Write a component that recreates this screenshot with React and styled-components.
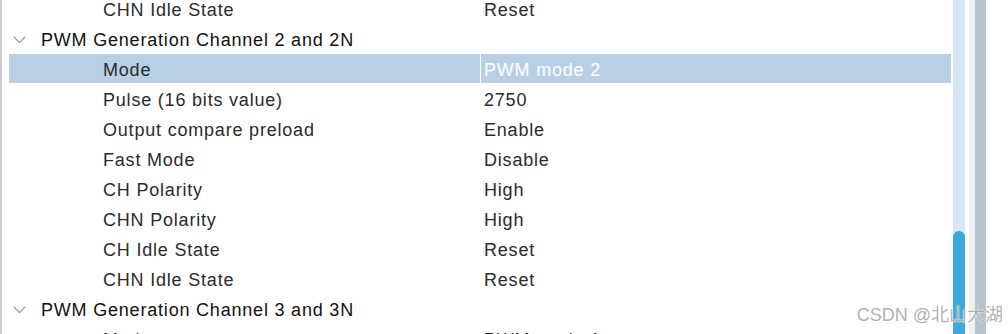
import React from 'react'
import styled, { createGlobalStyle } from 'styled-components'

const Global = createGlobalStyle`
  html, body {
    margin: 0;
    padding: 0;
    background: #fff;
    overflow: hidden;
  }
  body {
    font-family: "Liberation Sans", Arial, sans-serif;
  }
`

const rows = [
  { level: 2, label: 'CHN Idle State', value: 'Reset' },
  { level: 1, label: 'PWM Generation Channel 2 and 2N' },
  { level: 2, label: 'Mode', value: 'PWM mode 2', selected: true },
  { level: 2, label: 'Pulse (16 bits value)', value: '2750' },
  { level: 2, label: 'Output compare preload', value: 'Enable' },
  { level: 2, label: 'Fast Mode', value: 'Disable' },
  { level: 2, label: 'CH Polarity', value: 'High' },
  { level: 2, label: 'CHN Polarity', value: 'High' },
  { level: 2, label: 'CH Idle State', value: 'Reset' },
  { level: 2, label: 'CHN Idle State', value: 'Reset' },
  { level: 1, label: 'PWM Generation Channel 3 and 3N' },
  { level: 2, label: 'Mode', value: 'PWM mode 1' },
]

function Chevron() {
  return (
    <svg width="13" height="8" viewBox="0 0 13 8">
      <polyline points="0.8,0.8 6.5,6.6 12.2,0.8" fill="none" stroke="#9a9a9a" strokeWidth="1.3" />
    </svg>
  )
}

function App() {
  return (
    <>
      <Global />
      <Frame>
        <Tree>
          <List>
            {rows.map((r, i) => (
              <Row key={i} $selected={r.selected}>
                <Label $level={r.level}>
                  {r.level === 1 && <Toggle><Chevron /></Toggle>}
                  {r.label}
                </Label>
                {r.level === 2 && <Value $selected={r.selected}>{r.value}</Value>}
              </Row>
            ))}
          </List>
        </Tree>
        <ScrollArea>
          <Track>
            <Thumb />
          </Track>
          <Gap />
          <Rail />
          <OuterRail />
        </ScrollArea>
        <Watermark>CSDN @北山大湖</Watermark>
      </Frame>
    </>
  )
}

const Frame = styled.div`
  position: relative;
  display: flex;
  height: 334px;
  width: 1008px;
  overflow: hidden;
  border-left: 2px solid #c8cdd2;
  box-sizing: border-box;
`

const Tree = styled.div`
  width: 942px;
  margin-left: 7px;
  overflow: hidden;
`

const List = styled.div`
  margin-top: -6px;
  display: flex;
  flex-direction: column;
`

const Row = styled.div`
  display: grid;
  grid-template-columns: 471px 1fr;
  height: 30px;
  background: ${(p) => (p.$selected ? '#b9cfe5' : 'transparent')};
  background-clip: content-box;
  padding-bottom: 1px;
  box-sizing: border-box;
  font-size: 18px;
  letter-spacing: 0.8px;
  color: #222;
  white-space: nowrap;
`

const Label = styled.div`
  height: 30px;
  box-sizing: border-box;
  padding-top: 1px;
  line-height: 30px;
  padding-left: ${(p) => (p.$level === 1 ? '4px' : '94px')};
  color: ${(p) => (p.$level === 1 ? '#111' : '#2b2b2b')};
`

const Toggle = styled.span`
  display: inline-block;
  width: 28px;
  vertical-align: top;
  padding-top: 11px;
  line-height: 0;
`

const Value = styled.div`
  height: 30px;
  box-sizing: border-box;
  padding-top: 1px;
  line-height: 30px;
  padding-left: 3px;
  border-left: 1px solid ${(p) => (p.$selected ? '#ffffff' : 'transparent')};
  color: ${(p) => (p.$selected ? '#ffffff' : '#2b2b2b')};
`

const ScrollArea = styled.div`
  display: flex;
  margin-left: 2px;
  height: 100%;
`

const Track = styled.div`
  position: relative;
  width: 12px;
  background: #d6e6f4;
`

const Thumb = styled.div`
  position: absolute;
  left: 0;
  right: 0;
  top: 231px;
  bottom: -10px;
  background: #3aa9dc;
  border-radius: 6px 6px 0 0;
`

const Gap = styled.div`
  width: 4px;
  background: #fff;
`

const Rail = styled.div`
  width: 6px;
  background: #f0f1f3;
`

const OuterRail = styled.div`
  width: 11px;
  background: #b8c4cc;
`

const Watermark = styled.div`
  position: absolute;
  right: 5px;
  bottom: 8px;
  font-family: "Liberation Sans", "Noto Sans CJK SC", sans-serif;
  font-size: 18px;
  color: rgba(140, 140, 140, 0.7);
  text-shadow: 0 0 2px #fff, 0 0 1px #fff;
  white-space: nowrap;
`

export default App
